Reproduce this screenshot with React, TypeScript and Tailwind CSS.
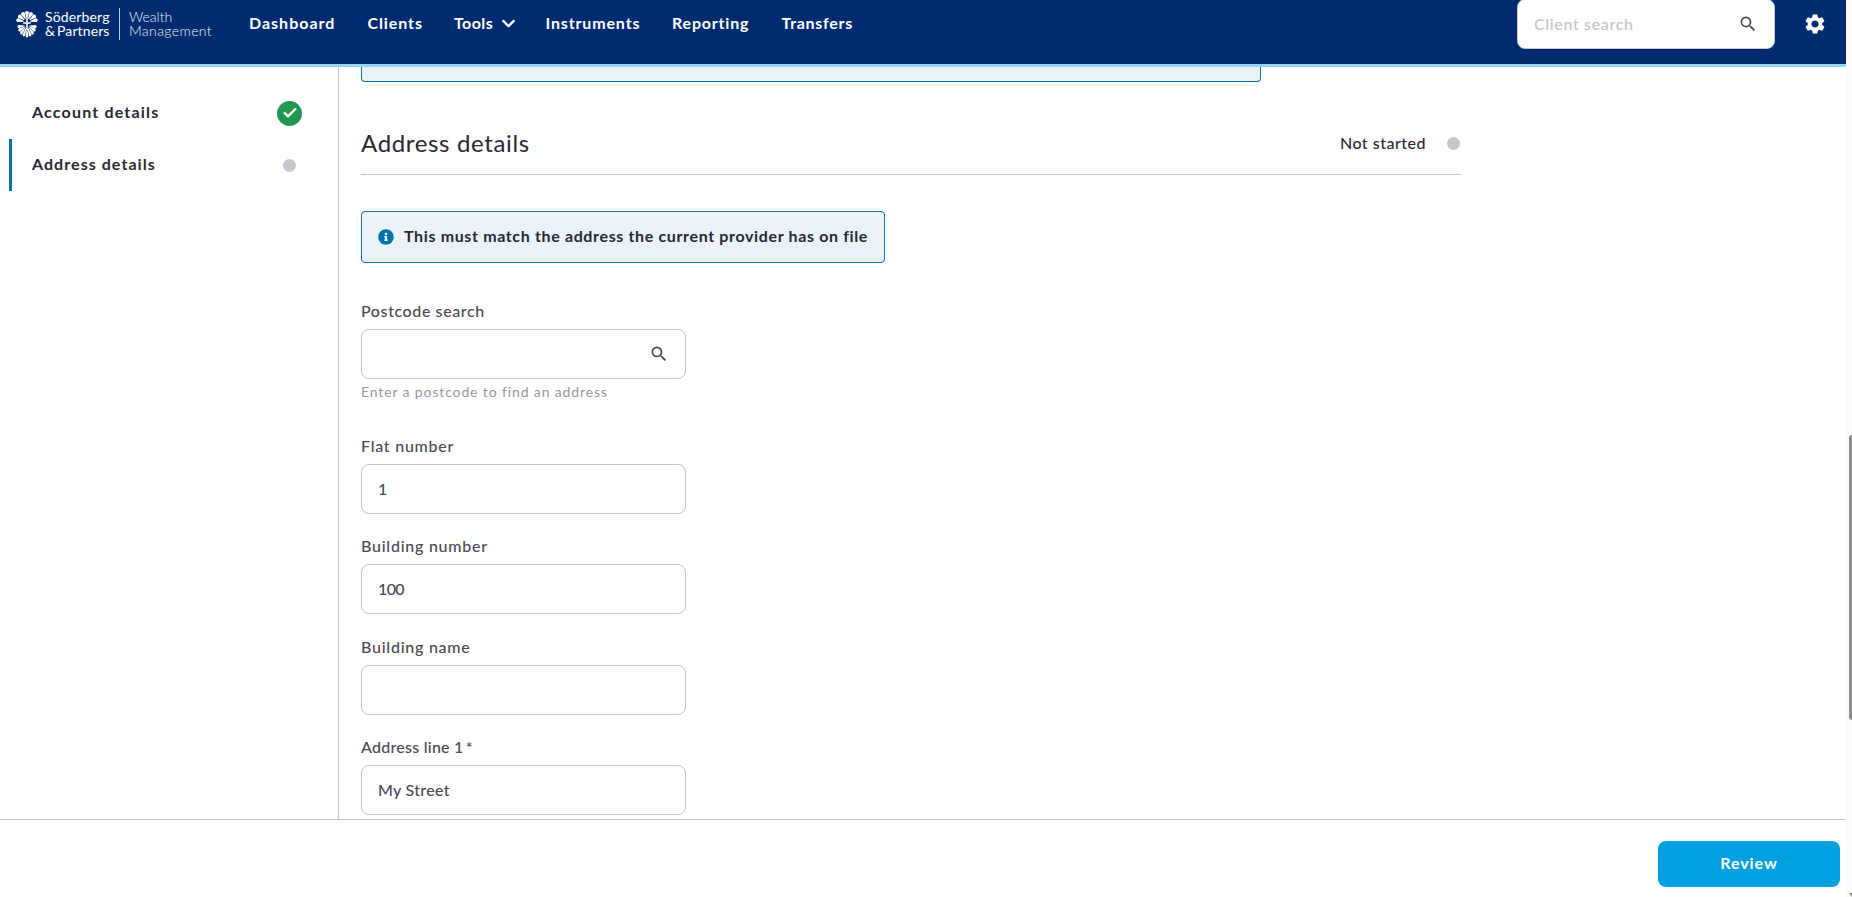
import React from "react";
import { Check, ChevronDown } from "lucide-react";
import { FaInfoCircle } from "react-icons/fa";
import { MdSearch, MdSettings } from "react-icons/md";

const navItems = [
  { label: "Dashboard", className: "w-[86px] tracking-[1px]" },
  { label: "Clients", className: "w-[54px] tracking-[0.9px]" },
  { label: "Tools", className: "w-[59px] tracking-[0.4px]", menu: true },
  { label: "Instruments", className: "w-[94px] tracking-[0.85px]" },
  { label: "Reporting", className: "w-[77px] tracking-[0.8px]" },
  { label: "Transfers", className: "w-[72px] tracking-[0.7px]" },
];

function Logo() {
  return (
    <div className="flex w-[232px] items-center pl-4 text-[14px] leading-[13.6px] text-white">
      <svg width="22" height="29" viewBox="0 0 22 29" fill="#fff">
        {[-78, -52, -26, 0, 26, 52, 78].map((angle) => (
          <path
            key={angle}
            d="M-0.4 -3.4 L-2.1 -9.6 Q0 -12.4 2.1 -9.6 L0.4 -3.4Z"
            transform={`translate(11 12) rotate(${angle})`}
          />
        ))}
        <path d="M10.2 8h1.6v4.2h3v1.6h-3V20h-1.6v-6.200h-3v-1.6h3z" />
        {[-98, -117, -137, -158, 180, 158, 137, 117, 98].map((angle) => (
          <path
            key={angle}
            d="M-0.3 -3 L-1.7 -10.6 Q0 -13.6 1.7 -10.6 L0.3 -3Z"
            transform={`translate(11 15.3) scale(0.8 1) rotate(${angle})`}
          />
        ))}
      </svg>
      <div className="ml-[7px] w-[74px]">
        <p className="tracking-[0.15px]">Söderberg</p>
        <p className="whitespace-nowrap tracking-[0.1px]">
          &amp;<span className="ml-0.5">Partners</span>
        </p>
      </div>
      <div className="h-8 w-px bg-[#b9c8dc]" />
      <div className="ml-[9px] font-light text-[#eef3f9]">
        <p>Wealth</p>
        <p className="tracking-[0.4px]">Management</p>
      </div>
    </div>
  );
}

function Header() {
  return (
    <header className="h-[67px] shrink-0 border-b-[3px] border-[#93d6f1] bg-[#002c6f]">
      <div className="flex h-12 items-center">
        <Logo />
        <nav className="flex gap-[32.5px] pb-0.5 pl-[17px] font-bold text-white">
          {navItems.map((item) => (
            <a
              key={item.label}
              className={`flex items-center whitespace-nowrap leading-6 ${item.className}`}
            >
              {item.label}
              {item.menu && (
                <ChevronDown
                  className="ml-[5px] shrink-0"
                  size={21}
                  strokeWidth={2.6}
                />
              )}
            </a>
          ))}
        </nav>
        <div className="ml-auto flex h-[50px] w-[258px] items-center justify-between rounded-lg border border-[#c9c7cd] bg-white pr-4 pl-4">
          <input
            placeholder="Client search"
            className="w-[180px] font-medium tracking-[0.65px] outline-none placeholder:text-[#c6c4cb]"
          />
          <MdSearch size={20} className="text-[#4b4856]" />
        </div>
        <MdSettings size={24} className="mr-[19px] ml-7 text-white" />
      </div>
    </header>
  );
}

function Sidebar() {
  return (
    <aside className="w-[339px] shrink-0 border-r border-[#c7c7c9] pt-5 font-bold text-[#2a2735]">
      <div className="ml-[9px] flex h-[52px] items-center justify-between border-l-[3px] border-transparent pr-9 pl-5">
        <span className="pb-0.5 tracking-[1.18px]">Account details</span>
        <span className="flex size-[25px] items-center justify-center rounded-full bg-[#229753] text-white">
          <Check size={16} strokeWidth={3.6} />
        </span>
      </div>
      <div className="ml-[9px] flex h-[52px] items-center justify-between border-l-[3px] border-[#0572a9] pr-9 pl-5">
        <span className="pb-0.5 tracking-[1.05px]">Address details</span>
        <span className="mr-[6px] size-[13px] rounded-full bg-[#c8c6cc]" />
      </div>
    </aside>
  );
}

type FieldProps = {
  label: string;
  value?: string;
  labelClass?: string;
  valueClass?: string;
  search?: boolean;
  required?: boolean;
};
function Field({
  label,
  value = "",
  labelClass = "tracking-[0.75px]",
  valueClass = "",
  search,
  required,
}: FieldProps) {
  return (
    <div className="text-[#4b4856]">
      <label className={`block font-medium leading-5 ${labelClass}`}>
        {label}
        {required && <span className="ml-0.5">*</span>}
      </label>
      <div className="mt-2 flex h-[50px] w-[325px] items-center rounded-lg border border-[#c4c4c6] bg-white pr-4 pl-4">
        <input
          defaultValue={value}
          className={`min-w-0 flex-1 pb-px font-medium outline-none ${valueClass}`}
        />
        {search && <MdSearch size={20} />}
      </div>
    </div>
  );
}

function AddressForm() {
  return (
    <main className="flex-1 overflow-hidden pl-[22px]">
      <div className="h-[15px] w-[900px] rounded-b border border-t-0 border-[#0572a9] bg-[#eaf3fa]" />
      <div className="mt-[29px] flex h-[64px] w-[1100px] items-center justify-between border-b border-[#c4c4c8] text-[#2a2735]">
        <h1 className="text-2xl tracking-[0.65px]">Address details</h1>
        <div className="flex items-center">
          <span className="mr-[21px] font-medium tracking-[0.5px]">
            Not started
          </span>
          <span className="mt-px mr-px size-[13px] rounded-full bg-[#c8c6cc]" />
        </div>
      </div>
      <div className="mt-9 flex h-[52px] w-[524px] items-center gap-[10px] rounded border border-[#0572a9] bg-[#eaf3fa] pl-4">
        <FaInfoCircle size={16} className="shrink-0 text-[#0572a9]" />
        <p className="pb-0.5 font-bold whitespace-nowrap tracking-[0.64px] text-[#2a2735]">
          This must match the address the current provider has on file
        </p>
      </div>
      <div className="mt-[38px]">
        <Field label="Postcode search" labelClass="tracking-[0.6px]" search />
        <p className="mt-[3px] text-sm tracking-[0.87px] text-[#98969e]">
          Enter a postcode to find an address
        </p>
      </div>
      <div className="mt-[34px] flex flex-col gap-[22.4px]">
        <Field label="Flat number" value="1" />
        <Field
          label="Building number"
          value="100"
          valueClass="tracking-[-0.6px]"
        />
        <Field label="Building name" />
        <Field
          label="Address line 1"
          labelClass="tracking-[0.25px]"
          value="My Street"
          valueClass="tracking-[0.3px]"
          required
        />
      </div>
    </main>
  );
}

function App() {
  return (
    <div className="flex h-[897px] overflow-hidden bg-white font-['Lato',sans-serif] text-base">
      <div className="flex flex-1 flex-col">
        <Header />
        <div className="flex h-[752px] shrink-0">
          <Sidebar />
          <AddressForm />
        </div>
        <footer className="flex flex-1 justify-end border-t border-[#c4c4c6] pt-[21px] pr-[6px]">
          <button className="h-[46px] w-[182px] rounded-lg bg-[#009fe0] pb-0.5 font-bold tracking-[0.9px] text-white">
            Review
          </button>
        </footer>
      </div>
      <div className="flex w-[6px] shrink-0 flex-col items-end bg-[#fbfbfb] pt-[435px]">
        <div className="h-[285px] w-[3px] rounded-l-full bg-[#8b8d8b]" />
        <svg className="mt-auto" width="3" height="4" viewBox="0 0 3 4">
          <path d="M0 0h3v4z" fill="#8a7f7a" />
        </svg>
      </div>
    </div>
  );
}

export default App;
